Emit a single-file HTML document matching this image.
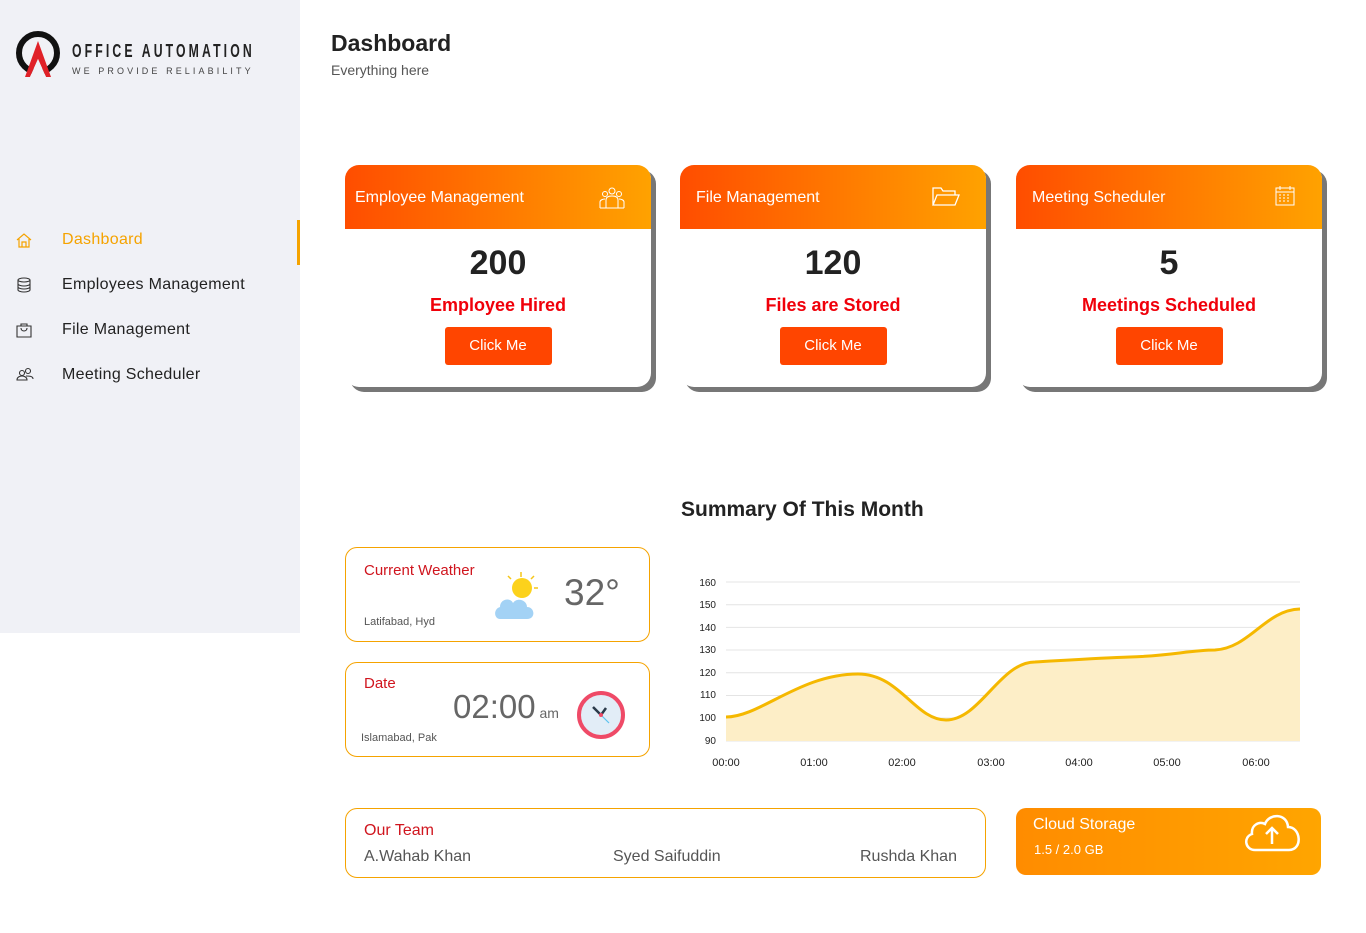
<!DOCTYPE html>
<html><head><meta charset="utf-8"><style>
*{margin:0;padding:0;box-sizing:border-box}
body{width:1366px;height:933px;background:#fff;font-family:"Liberation Sans",sans-serif;position:relative;overflow:hidden}
.side{position:absolute;left:0;top:0;width:300px;height:633px;background:#f0f1f6}
.nav{position:absolute;left:0;width:300px;height:44px;display:flex;align-items:center;font-size:16px;color:#222;letter-spacing:.3px}
.nav svg{position:absolute;left:16px}
.nav span{position:absolute;left:62px}
.card{position:absolute;top:165px;width:306px;height:222px;background:#fff;border-radius:14px;box-shadow:5px 5px 0 #777;overflow:hidden}
.ch{height:64px;background:linear-gradient(90deg,#ff4d00,#ffa200);color:#fff;font-size:16px;padding:24px 10px;position:relative;white-space:nowrap}
.ch svg{position:absolute;right:26px;top:20px}
.num{text-align:center;font-size:34px;font-weight:bold;color:#222;margin-top:15px}
.lab{text-align:center;font-size:18px;font-weight:bold;color:#f0000a;margin-top:12px}
.btn{display:block;margin:11px auto 0;width:107px;height:38px;background:#ff4500;color:#fff;border-radius:3px;font-size:15px;text-align:center;line-height:38px}
.box{position:absolute;border:1px solid #f5a300;border-radius:12px;background:#fff}
.red{color:#d0151e}
</style></head><body>
<div class="side">
 <svg style="position:absolute;left:15px;top:29px" width="46" height="48" viewBox="0 0 46 48"><circle cx="23" cy="24" r="19" fill="none" stroke="#111" stroke-width="6"/><polygon points="10,48 23,12 36,48 31,48 23,30 15,48" fill="#e02128"/><polygon points="15,48 23,30 31,48" fill="#f0f1f6"/></svg>
 <div style="position:absolute;left:72px;top:41px;font-size:18px;letter-spacing:4.6px;font-weight:bold;color:#222;transform:scaleX(.68);transform-origin:left;white-space:nowrap">OFFICE AUTOMATION</div>
 <div style="position:absolute;left:72px;top:66px;font-size:9px;letter-spacing:3.1px;color:#444;white-space:nowrap">WE PROVIDE RELIABILITY</div>
 <div style="position:absolute;left:297px;top:220px;width:3px;height:45px;background:#f5a300"></div>
 <div class="nav" style="top:218px;color:#f5a300"><svg width="16" height="16" viewBox="0 0 16 16" fill="none" stroke="#f5a300" stroke-width="1.2"><path d="M1 8L8 2l7 6M3 7v8h10V7M6 15v-5h4v5"/></svg><span>Dashboard</span></div>
 <div class="nav" style="top:263px"><svg width="16" height="16" viewBox="0 0 16 16" fill="none" stroke="#333" stroke-width="1.1"><ellipse cx="8" cy="3" rx="6" ry="2"/><path d="M2 3v10c0 1 3 2 6 2s6-1 6-2V3M2 7c0 1 3 2 6 2s6-1 6-2M2 10c0 1 3 2 6 2s6-1 6-2"/></svg><span>Employees Management</span></div>
 <div class="nav" style="top:308px"><svg width="16" height="16" viewBox="0 0 16 16" fill="none" stroke="#333" stroke-width="1.1"><path d="M1 4h14v11H1zM5 4V2h6v2M5 6c0 4 6 4 6 0"/></svg><span>File Management</span></div>
 <div class="nav" style="top:353px"><svg width="18" height="16" viewBox="0 0 18 16" fill="none" stroke="#333" stroke-width="1.1"><circle cx="6" cy="6" r="2.5"/><circle cx="12" cy="4" r="2.5"/><path d="M1 13c0-3 3-4 5-4s5 1 5 4zM10 9c3 0 7 0 7 3"/></svg><span>Meeting Scheduler</span></div>
</div>
<div style="position:absolute;left:331px;top:30px;font-size:23px;font-weight:bold;color:#222">Dashboard</div>
<div style="position:absolute;left:331px;top:62px;font-size:14px;color:#555">Everything here</div>

<div class="card" style="left:345px"><div class="ch">Employee Management<svg width="26" height="24" viewBox="0 0 26 24" fill="none" stroke="#fff" stroke-width="1"><circle cx="13" cy="6" r="3"/><circle cx="6" cy="9" r="2.5"/><circle cx="20" cy="9" r="2.5"/><path d="M1 23v-6c0-2 3-3 5-3M25 23v-6c0-2-3-3-5-3M7 23v-8c0-3 3-4 6-4s6 1 6 4v8M1 23h24"/></svg></div><div class="num">200</div><div class="lab">Employee Hired</div><div class="btn">Click Me</div></div>
<div class="card" style="left:680px"><div class="ch" style="padding-left:16px">File Management<svg width="28" height="22" viewBox="0 0 28 22" fill="none" stroke="#fff" stroke-width="1.3"><path d="M1 20V3h8l2 3h12v4M1 20l4-10h22l-4 10z"/></svg></div><div class="num">120</div><div class="lab">Files are Stored</div><div class="btn">Click Me</div></div>
<div class="card" style="left:1016px"><div class="ch" style="padding-left:16px">Meeting Scheduler<svg width="22" height="22" viewBox="0 0 22 22" fill="none" stroke="#fff" stroke-width="1"><rect x="2" y="3" width="18" height="17"/><path d="M2 7h18M6 1v4M16 1v4M5 10h2M9 10h2M13 10h2M5 13h2M9 13h2M13 13h2M5 16h2M9 16h2M13 16h2"/></svg></div><div class="num">5</div><div class="lab">Meetings Scheduled</div><div class="btn">Click Me</div></div>

<div style="position:absolute;left:681px;top:498px;font-size:21px;font-weight:bold;color:#222">Summary Of This Month</div>

<div class="box" style="left:345px;top:547px;width:305px;height:95px">
 <div class="red" style="position:absolute;left:18px;top:14px;font-size:15px">Current Weather</div>
 <div style="position:absolute;left:18px;top:68px;font-size:11px;color:#555">Latifabad, Hyd</div>
 <svg style="position:absolute;left:148px;top:22px" width="52" height="50" viewBox="0 0 52 50"><g stroke="#f5c518" stroke-width="1.5"><path d="M27 2v5M40 6l-3 3M44 18h-4M14 6l3 3"/></g><circle cx="28" cy="18" r="10" fill="#fcd21c"/><path d="M6 49c-6 0-7-10 0-12 0-8 10-10 13-4 4-6 14-3 14 4 8 0 9 12 0 12z" fill="#a3d2f5"/></svg>
 <div style="position:absolute;left:218px;top:24px;font-size:37px;color:#666">32°</div>
</div>
<div class="box" style="left:345px;top:662px;width:305px;height:95px">
 <div class="red" style="position:absolute;left:18px;top:12px;font-size:15px">Date</div>
 <div style="position:absolute;left:107px;top:25px;font-size:33px;color:#666">02:00<span style="font-size:14px"> am</span></div>
 <div style="position:absolute;left:15px;top:69px;font-size:11px;color:#555">Islamabad, Pak</div>
 <svg style="position:absolute;left:230px;top:27px" width="50" height="50" viewBox="0 0 50 50"><circle cx="25" cy="25" r="22" fill="#e2edf7" stroke="#ef4a67" stroke-width="4"/><path d="M25 25l-8-8M25 25l5-7" stroke="#2b3a4a" stroke-width="2.5"/><path d="M25 25l8 8" stroke="#5cc3f0" stroke-width="1.2"/><circle cx="25" cy="25" r="2" fill="#ef4a67"/></svg>
</div>

<svg style="position:absolute;left:690px;top:570px" width="620" height="205">
 <g stroke="#e4e4e4" stroke-width="1">
  <line x1="36" y1="12" x2="610" y2="12"/><line x1="36" y1="34.7" x2="610" y2="34.7"/><line x1="36" y1="57.4" x2="610" y2="57.4"/><line x1="36" y1="80" x2="610" y2="80"/><line x1="36" y1="102.8" x2="610" y2="102.8"/><line x1="36" y1="125.5" x2="610" y2="125.5"/><line x1="36" y1="148" x2="610" y2="148"/><line x1="36" y1="171" x2="610" y2="171"/>
 </g>
 <g font-size="10" fill="#222" text-anchor="end" font-family="Liberation Sans">
  <text x="26" y="16">160</text><text x="26" y="38">150</text><text x="26" y="61">140</text><text x="26" y="83">130</text><text x="26" y="106">120</text><text x="26" y="128">110</text><text x="26" y="151">100</text><text x="26" y="174">90</text>
 </g>
 <g font-size="11" fill="#222" text-anchor="middle" font-family="Liberation Sans">
  <text x="36" y="196">00:00</text><text x="124" y="196">01:00</text><text x="212" y="196">02:00</text><text x="301" y="196">03:00</text><text x="389" y="196">04:00</text><text x="477" y="196">05:00</text><text x="566" y="196">06:00</text>
 </g>
 <path d="M36 147C70 147 110 104 168 104C210 104 225 150 256 150C290 150 310 92 345 92C380 90 410 88 440 87C480 86 500 80 525 80C560 78 575 40 610 39L610 171L36 171Z" fill="#fdeec7"/>
 <path d="M36 147C70 147 110 104 168 104C210 104 225 150 256 150C290 150 310 92 345 92C380 90 410 88 440 87C480 86 500 80 525 80C560 78 575 40 610 39" fill="none" stroke="#f5b800" stroke-width="3"/>
</svg>

<div class="box" style="left:345px;top:808px;width:641px;height:70px">
 <div class="red" style="position:absolute;left:18px;top:13px;font-size:16px">Our Team</div>
 <div style="position:absolute;left:18px;top:39px;font-size:16px;color:#555">A.Wahab Khan</div>
 <div style="position:absolute;left:267px;top:39px;font-size:16px;color:#555">Syed Saifuddin</div>
 <div style="position:absolute;left:514px;top:39px;font-size:16px;color:#555">Rushda Khan</div>
</div>
<div style="position:absolute;left:1016px;top:808px;width:305px;height:67px;border-radius:10px;background:linear-gradient(90deg,#ff8c00,#ffa500)">
 <div style="position:absolute;left:17px;top:8px;font-size:16px;color:#fff">Cloud Storage</div>
 <div style="position:absolute;left:18px;top:34px;font-size:13px;color:#fff">1.5 / 2.0 GB</div>
 <svg style="position:absolute;left:227px;top:5px" width="60" height="40" viewBox="0 0 60 40" fill="none" stroke="#fff" stroke-width="2.5"><path d="M12 37C2 37 0 24 9 21 8 12 16 8 22 11 26 0 44 0 45 14 58 14 60 37 46 37Z"/><path d="M29 31V15M23 21l6-6 6 6"/></svg>
</div>
</body></html>
